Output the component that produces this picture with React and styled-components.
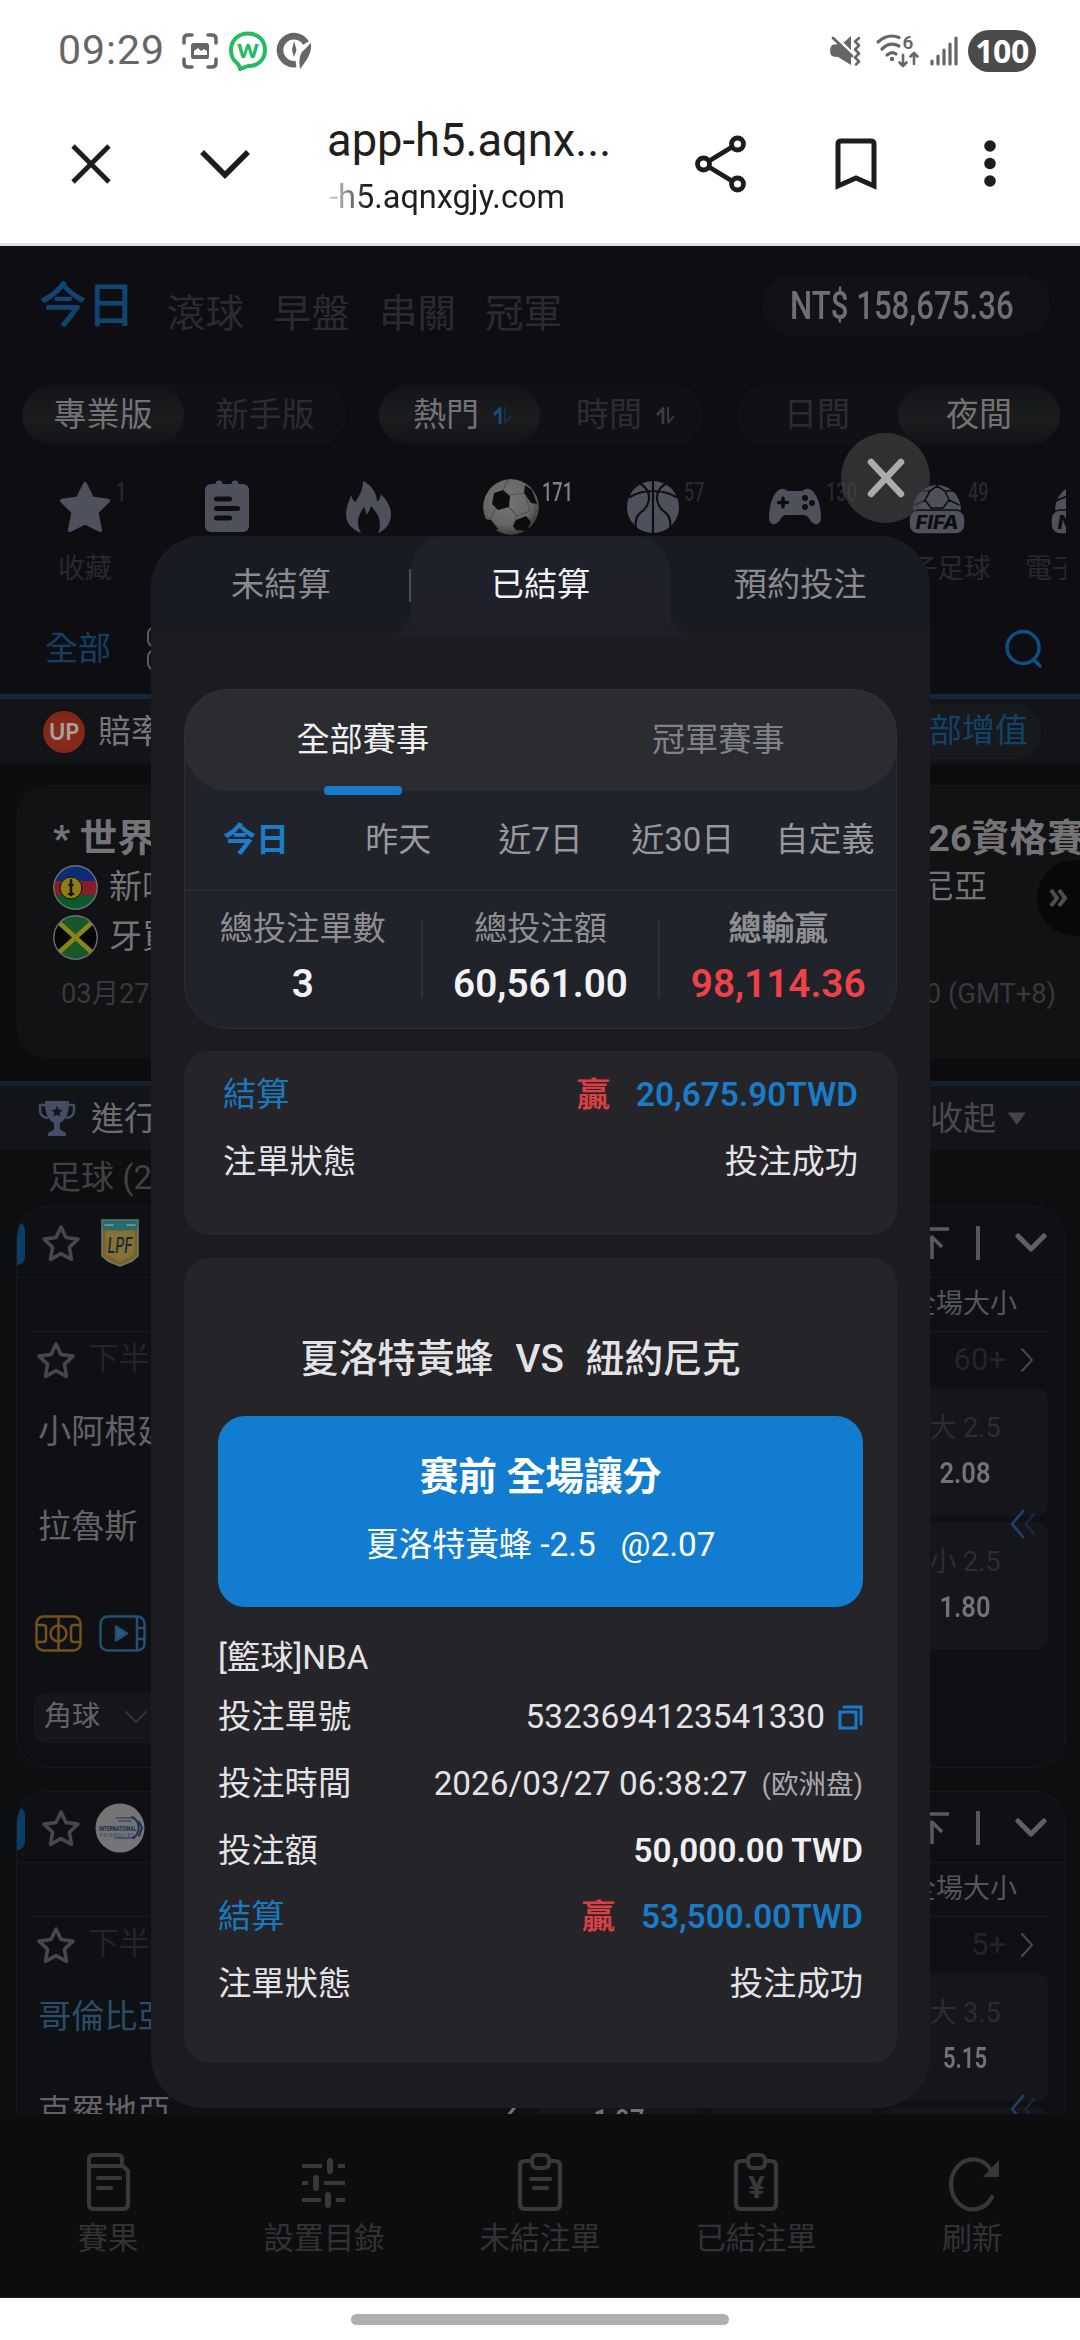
import React from "react";
import styled, { createGlobalStyle, css } from "styled-components";

const Global = createGlobalStyle`
  * { box-sizing: border-box; }
  html, body { margin: 0; background: #fff; }
  body { font-family: Roboto, "Noto Sans CJK TC", sans-serif; -webkit-font-smoothing: antialiased; }
`;

const Screen = styled.div`
  width: 1080px; height: 2340px; overflow: hidden; background: #fff; line-height: 1.2;
  display: flex; flex-direction: column; white-space: nowrap; position: relative;
  svg { display: block; flex: none; }
`;

/* ---------- system and browser chrome ---------- */
const StatusBar = styled.div`
  height: 102px; flex: none; display: flex; align-items: center;
  padding: 0 44px 0 58px; color: #666;
`;
const Clock = styled.div`font-size: 41px; width: 124px; letter-spacing: 1px;`;
const StatusGroup = styled.div`
  display: flex; align-items: center; gap: 10px; ${p => p.$end && "margin-left: auto;"}
`;
const Battery = styled.div`
  width: 68px; height: 42px; border-radius: 21px; background: #4a4a4a; color: #fff;
  font: 700 32px/42px "Open Sans", Roboto, sans-serif; letter-spacing: -.5px; text-align: center;
`;
const BrowserBar = styled.div`
  height: 144px; flex: none; display: flex; align-items: center; color: #1d1d1f;
  border-bottom: 3px solid #dde2e4; padding: 0 0 17px 69px;
`;
const BarIcon = styled.div`width: ${p => p.$w}px; display: flex; ${p => p.$c && "justify-content: center;"}`;
const Address = styled.div`width: 347px; color: #1f1f21;`;
const PageTitle = styled.div`font-size: 45.3px; line-height: 58px; height: 60px; margin: 0 0 0 -2px;`;
const PageHost = styled.div`
  font-size: 32.5px; line-height: 40px; margin-top: 5px; width: fit-content; color: transparent;
  background: linear-gradient(90deg, #ddd 0, #777 22px, #1f1f21 36px); background-clip: text;
`;

/* ---------- page behind the sheet ---------- */
const Page = styled.main`
  height: 1868px; flex: none; overflow: hidden; background: #0d0e10;
  display: flex; flex-direction: column;
  > * { flex: none; }
`;
const TopZone = styled.div`background: #0e0e12; border-bottom: 5px solid #14273a;`;
const Header = styled.div`height: 118px; display: flex; align-items: center; padding: 0 30px 0 39px;`;
const NavMain = styled.div`font-size: 48px; line-height: 60px; font-weight: 500; color: #0f4571; width: 128px; padding-top: 1px;`;
const NavItem = styled.div`font-size: 38.5px; line-height: 50px; color: #2b2b2e; width: 106px; margin-top: 18px;`;
const Balance = styled.div`
  margin-left: auto; width: 288px; height: 62px; border-radius: 31px; background: #101216; padding: 2px 8px 0 0;
  display: flex; justify-content: center; align-items: center; color: #6f6f72;
`;
const Narrow = styled.span`
  display: inline-block; transform: scaleX(${p => p.$s || 0.8}); transform-origin: ${p => p.$o || "center"};
  font-size: ${p => p.$f}px; font-weight: 500;
`;
const Segments = styled.div`height: 102px; display: flex; align-items: center; gap: 33px; padding: 0 20px 0 22px;`;
const Segment = styled.div`flex: 1; height: 62px; display: flex; align-items: center; border-radius: 31px; background: #101115;`;
const Option = styled.div`
  flex: 1; height: 58px; border-radius: 29px; display: flex; align-items: center; justify-content: center; gap: 14px;
  font-size: 33px; color: ${p => (p.$on ? "#737375" : "#2c2d30")}; padding-left: ${p => p.$pl || 0}px;
  ${p => p.$on && "background: linear-gradient(#121417, #1a1c1e 55%, #111316);"}
`;
const Sports = styled.div`height: 136px; width: 1066px; overflow: hidden; padding: 13px 0 0 14px; display: flex;`;
const Sport = styled.div`width: 142px; flex: none; display: flex; flex-direction: column; align-items: center;`;
const SportIcon = styled.div`height: 56px; display: flex; align-items: center; position: relative;`;
const Count = styled.div`
  position: absolute; left: calc(50% + 31px); top: 0; font-size: 26px; line-height: 26px; font-weight: 500;
  transform: scaleX(.7); transform-origin: left; color: ${p => (p.$on ? "#808080" : "#28292d")};
`;
const SportName = styled.div`font-size: 27px; line-height: 32px; margin-top: 18px; color: #29292c;`;
const Filters = styled.div`
  height: 92px; display: flex; align-items: center; padding: 1px 36px 0 45px; font-size: 33px; color: #124064; gap: 36px;
  svg:last-child { margin-left: auto; }
`;
const OddsBar = styled.div`
  height: 65px; background: #121417; display: flex; align-items: center; padding: 0 39px 0 43px; font-size: 33px; color: #777779;
`;
const UpBadge = styled.div`
  width: 42px; height: 42px; border-radius: 50%; margin-right: 13px; text-align: center;
  background: radial-gradient(circle at 50% 55%, #8f2c1b, #7e2718 70%); color: #a9a09e; font: 700 22px/42px Lato, sans-serif;
`;
const Boost = styled.div`
  margin-left: auto; height: 55px; line-height: 54px; border-radius: 27px; padding: 0 13px 0 40px; background: #17191c; color: #124368;
`;
const Carousel = styled.div`height: 317px; padding: 21px 0 23px 16px; background: #0d0d0f;`;
const Feature = styled.div`
  height: 273px; border-radius: 32px 0 0 32px; background: #111214; padding: 31px 0 0 37px; position: relative; color: #747476;
`;
const Between = styled.div`display: flex; justify-content: space-between; align-items: center;`;
const FeatureTitle = styled(Between)`font-size: 37.8px; font-weight: 700; height: 46px; margin-right: -5px;`;
const FeatureTeam = styled(Between)`height: 50px; font-size: 33px; padding-right: 93px; > span { display: flex; align-items: center; gap: 11px; }`;
const FeatureDate = styled(Between)`padding: 0 24px 0 8px; height: 40px; margin-top: 12px; font-size: 27.3px; color: #38393c;`;
const NextTab = styled.div`
  position: absolute; right: 0; top: 75px; width: 43px; height: 76px; border-radius: 38px 0 0 38px; background: #08080a;
  display: flex; align-items: center; justify-content: center;
`;
const SectionBar = styled.div`
  height: 69px; border-top: 5px solid #122132; background: #121418; display: flex; align-items: center;
  padding: 1px 54px 0 38px; font-size: 33px; color: #6d6d70;
`;
const SectionName = styled.div`margin-left: 15px;`;
const Collapse = styled.div`margin-left: auto; display: flex; align-items: center; gap: 12px; color: #49494b;`;
const SectionCount = styled.div`height: 56px; padding: 0 48px; font-size: 33px; line-height: 55px; color: #414144;`;

const League = styled.section`
  margin: 0 14px 23px 16px; height: 562px; border: 1px solid #17191c; border-radius: 32px; background: #0f1013;
  overflow: hidden; flex: none;
`;
const LeagueHead = styled.div`
  height: 71px; border-bottom: 1px solid #17191c; display: flex; align-items: center; padding-top: 2px;
  > i { width: 8px; height: 43px; border-radius: 0 16px 16px 0; background: #0a3e66; margin-right: 15px; }
`;
const LeagueBadge = styled.div`width: 48px; margin-left: 14px; display: flex; justify-content: center;`;
const LeagueTools = styled.div`margin-left: auto; display: flex; align-items: center; padding-right: 18px; color: #5a5a5d;`;
const Divider = styled.div`width: 4px; height: 34px; background: #57575a; margin: 0 35px 0 27px;`;
const Columns = styled.div`
  margin: 0 17px 0 15px; height: 54px; border-bottom: 1px solid #1a1c1f; text-align: right; padding-right: 31px;
  font-size: 27px; line-height: 53px; color: #55575a;
`;
const MatchInfo = styled.div`height: 56px; display: flex; align-items: center; padding: 0 32px 0 18px; font-size: 31px; color: #222427;`;
const Period = styled.div`margin-left: 11px; margin-top: -3px;`;
const More = styled.div`margin-left: auto; display: flex; gap: 15px; align-items: center; margin-top: -1px;`;
const MatchBody = styled.div`display: flex; justify-content: space-between; padding: 0 17px 0 21px;`;
const Teams = styled.div`width: 440px;`;
const Team = styled.div`height: 95px; line-height: 87px; font-size: 33.2px; color: ${p => (p.$hl ? "#284e69" : "#636365")};`;
const Tools = styled.div`display: flex; gap: 17px; margin: 37px 0 0 -3px;`;
const Select = styled.div`
  margin: 41px 0 0 -4px; width: 150px; height: 50px; border-radius: 12px; background: #15161a; padding: 0 0 2px 10px;
  display: flex; align-items: center; gap: 25px; font-size: 28px; color: #646467;
`;
const Odds = styled.div`display: grid; grid-template-columns: repeat(3, 166px); gap: 6px 7px; position: relative; align-content: start;`;
const OddsCell = styled.div`
  height: 128px; border-radius: 12px; background: #15161a; display: flex; flex-direction: column; align-items: center;
  padding-top: 20px; color: #2c2d31; font-size: 27px; line-height: 40px;
`;
const Price = styled.b`
  color: #737376; font-size: 29px; line-height: 50px; font-weight: 600; margin-top: ${p => p.$up || 0}px;
  transform: scaleX(${p => p.$s || 0.88});
`;
const Swipe = styled.div`position: absolute; right: 11px; top: 120px;`;
const PageFlick = styled.div`position: absolute; left: -31px; top: 132px;`;
const TabBar = styled.nav`
  height: 184px; flex: none; background: #0d0d10; display: flex; padding-top: 38px;
  border-bottom: 1px solid #1a1a1c; color: #323235;
`;
const Tab = styled.div`flex: 1; display: flex; flex-direction: column; align-items: center; font-size: 30.3px; line-height: 40px; gap: 7px;`;
const Gesture = styled.div`height: 42px; display: flex; justify-content: center; padding-top: 16px; > i { width: 378px; height: 11px; border-radius: 6px; background: #afafaf; }`;

/* ---------- sheet ---------- */
const Close = styled.button`
  position: absolute; left: 841px; top: 433px; width: 89px; height: 90px; border-radius: 50%; border: 0; padding: 0;
  background: rgba(72, 72, 74, .6); display: flex; align-items: center; justify-content: center;
`;
const Sheet = styled.div`
  position: absolute; left: 151px; top: 536px; width: 779px; height: 1572px; border-radius: 52px; overflow: hidden;
  background: #1c1b20; display: flex; flex-direction: column; color: #e3e3e6;
`;
const SheetTabs = styled.div`height: 101px; flex: none; background: linear-gradient(#181b22 80%, #1b1c21); display: flex;`;
const SheetTab = styled.div`
  flex: 1; text-align: center; font-size: 33.2px; line-height: 97px; color: #8a8b8f; position: relative;
  ${p => p.$bar && css`&::after { content: ""; position: absolute; right: 0; top: 33px; width: 2px; height: 33px; background: #4c4e53; }`}
  ${p => p.$on && css`
    color: #f2f2f5; background: linear-gradient(#1f212a, #1f2029 80%, #1e1d24); border-radius: 36px 36px 0 0;
    &::before, &::after {
      content: ""; position: absolute; bottom: 0; width: 28px; height: 28px;
    }
    &::before { right: 100%; background: radial-gradient(circle at 0 0, transparent 27px, #1e1e26 28px); }
    &::after { left: 100%; background: radial-gradient(circle at 100% 0, transparent 27px, #1e1e26 28px); }
  `}
`;
const Summary = styled.div`
  margin: 52px 33px 0; height: 340px; flex: none; border: 1px solid #2b2e33; border-radius: 44px; background: #20232a;
`;
const Kinds = styled.div`height: 102px; margin: -1px; border-radius: 46px; background: #2b2c30; display: flex; border: 1px solid #303236; border-bottom: 0;`;
const Kind = styled.div`
  flex: 1; text-align: center; font-size: 33.2px; line-height: 99px; color: ${p => (p.$on ? "#f0f0f2" : "#818286")}; position: relative;
  ${p => p.$on && css`&::after { content: ""; position: absolute; left: calc(50% - 39px); bottom: -4px; width: 78px; height: 9px; border-radius: 4px; background: #187bca; }`}
`;
const Ranges = styled.div`height: 101px; display: flex; border-bottom: 2px solid #272a30;`;
const Range = styled.div`
  flex: 1; text-align: center; font-size: 33px; line-height: 100px; color: #97989c;
  ${p => p.$on && "color: #1b7dc9; font-weight: 700;"}
`;
const Stats = styled.div`display: flex; padding-top: 30px;`;
const Stat = styled.div`
  flex: 1; height: 77px; text-align: center; color: #8e8f93; font-size: 33.2px; line-height: 16px;
  &:not(:last-child) { border-right: 2px solid #2d3036; }
  > b { display: block; margin: 30px -10px 0; font-size: 38.7px; line-height: 34px; font-weight: 600; color: ${p => p.$c || "#f2f2f4"}; }
`;
const Ticket = styled.div`
  margin: ${p => p.$mt}px 33px 0; border-radius: 26px; background: #252429; padding: ${p => p.$pad}; height: ${p => p.$h}px; flex: none;
`;
const Line = styled.div`
  display: flex; align-items: center; height: ${p => p.$h || 66.7}px; font-size: 33.3px; color: ${p => p.$c || "#e3e3e6"};
  > :first-child { margin-right: auto; }
`;
const Won = styled.span`color: #d84046; font-weight: 700; margin-right: 26px;`;
const Amount = styled.b`font-weight: 600; color: ${p => p.$c || "#f0f0f2"};`;
const Hint = styled.small`font-size: 27.5px; color: #a9a9ad; margin-left: 14px;`;
const Fixture = styled.div`
  height: 96px; padding-left: 82px; display: flex; gap: 22px; font-size: 38.7px; line-height: 78px; font-weight: 500;
`;
const Pick = styled.div`
  height: 191px; border-radius: 27px; background: #127dd0; color: #fff; text-align: center; padding-top: 37px; margin-bottom: 25px;
  font-size: 33.3px; line-height: 48px; white-space: pre;
  > b { display: block; font-size: 38.7px; line-height: 48px; margin-bottom: 20px; }
`;
const CopyGap = styled.span`margin-left: 13px;`;

/* ---------- drawings ---------- */
const S = ({ w, h, vb, children, ...r }) => (
  <svg width={w} height={h} viewBox={vb || `0 0 ${w} ${h}`} fill="none" overflow="visible" strokeLinecap="round" strokeLinejoin="round" {...r}>{children}</svg>
);
const muted = "#4e505c";
const dark = "#0e0e12";
const dim = "#38383b";

const StarSolid = () => (
  <S w={54} h={54}><path d="M27 4l7 14.500 16 2.300-11.500 11.300 3.500 17.900-15-7.500-15 7.500 3.500-17.900L4 20.800l16-2.300z" fill={muted} stroke={muted} strokeWidth="4" /></S>
);
const Notes = () => (
  <S w={44} h={52}>
    <rect y="3" width="44" height="48" rx="6" fill={muted} /><path d="M14 3v2M30 3v2" stroke={muted} strokeWidth="7" />
    <path d="M11.500 18h13M11.500 27.500h21M11.500 37h13" stroke={dark} strokeWidth="5" />
  </S>
);
const Flame = () => (
  <S w={46} h={54}><path d="M17 1C24 4 31 12 31 22c2-2 4-5 4-8 6 7 10 13 10 20 0 9-5 16-13 19 4-8 2-18-7-27-1 4-3 7-5 9 0-4-1-6-2-8-4 6-6 10-6 15 0 4 1 7 3 11C5 49 0 43 0 34c0-7 3-12 5-19 1 3 2 5 4 7 5-6 8-13 8-21z" fill={muted} /></S>
);
const Soccer = () => (
  <S w={58} h={58}>
    <defs>
      <radialGradient id="ball" cx=".45" cy=".4" r=".6"><stop offset="0" stopColor="#737371" /><stop offset=".7" stopColor="#676765" /><stop offset="1" stopColor="#3d3d3b" /></radialGradient>
      <clipPath id="ballClip"><circle cx="29" cy="29" r="28" /></clipPath>
    </defs>
    <g clipPath="url(#ballClip)">
      <circle cx="29" cy="29" r="28" fill="url(#ball)" />
      <path d="M28 17l15-2M27 29l8 9M13 31l-5 11M35 38l13-5-4-14M35 38l-3 7M20 14l6-12" stroke="#525250" strokeWidth="1.200" />
      <path d="M12 15l9-3 7 6-1 11-11 3-6-6zM43 7l7 5 5 14-6-1-7-10zM34 42l10-4 5 6-4 9-11-1-3-4zM1 41l8 1 7 9-5 3-10-7z" fill="#0d0d0e" />
    </g>
  </S>
);
const Basket = () => (
  <S w={52} h={52}>
    <circle cx="26" cy="26" r="26" fill={muted} />
    <path d="M26 0v52M3 16C16 8 36 8 49 16M14 3c14 10 7 24-1 29-4 4-5 10-4 16M38 3c-14 10-7 24 1 29 4 4 5 10 4 16" stroke={dark} strokeWidth="2.200" />
  </S>
);
const Pad = () => (
  <S w={52} h={38}>
    <path d="M12 1c3-1 5 1 7 2h14c2-1 4-3 7-2 8 2 12 18 12 28 0 9-7 9-11 3-2-4-4-5-7-5H18c-3 0-5 1-7 5-4 6-11 6-11-3C0 19 4 3 12 1z" fill={muted} />
    <path d="M14 10v9M9.500 14.500h9" stroke={dark} strokeWidth="3.500" /><g fill={dark}><circle cx="36" cy="10" r="3" /><circle cx="43" cy="15" r="3" /><circle cx="36" cy="19" r="3" /></g>
  </S>
);
const CupBall = ({ word, id }) => (
  <S w={56} h={56}>
    <path d="M4 31a24 25 0 1 1 48 0z" fill={muted} />
    {id === "f" ? <path d="M21 12l7-5 8 5 4 9-6 8H22l-6-8zM21 12l-9 0M36 12l8 0M40 21l10 5M16 21L6 26M28 7V2" stroke={dark} strokeWidth="1.600" />
      : <path d="M5 22C18 14 38 14 51 22M28 3v28" stroke={dark} strokeWidth="2" />}
    <rect x="0" y="31" width="56" height="24" rx="9" fill={muted} stroke={dark} strokeWidth="1.500" />
    <text x="28" y="50" textAnchor="middle" fontFamily="Inter, sans-serif" fontStyle="italic" fontWeight="800" fontSize="18.500" fill={dark} textLength="43" lengthAdjust="spacingAndGlyphs">{word}</text>
  </S>
);
const Sorter = ({ a, b }) => (
  <S w={19} h={19}><path d="M1 9L7 2.500V18" stroke={a} strokeWidth="2.800" strokeLinecap="butt" /><path d="M12 1v15.500l6-6" stroke={b} strokeWidth="2" strokeLinecap="butt" /></S>
);
const StarLine = () => (
  <S w={42} h={40}><path d="M21 4l5 10.500 12 1.600-8.600 8.200 2.100 12L21 30.600 10.500 36.300l2.100-12L4 16.100l12-1.600z" stroke="#46474b" strokeWidth="3.600" /></S>
);
const Shield = () => (
  <S w={38} h={48}>
    <path d="M1 1h36v36l-6 5-12 5-12-5-6-5z" fill="#7a6420" stroke="#6a7a7c" strokeWidth="1.500" />
    <path d="M1.500 1.500h35V11h-35z" fill="#276b70" /><path d="M4 6h8M26 6h8" stroke="#7d9b9c" strokeWidth="1.500" />
    <path d="M4.500 12h29v23L19 43 4.500 35z" fill="#84703a" />
    <text x="19" y="34" textAnchor="middle" fontFamily="Inter, sans-serif" fontStyle="italic" fontWeight="500" fontSize="22" fill="#10292e" textLength="25" lengthAdjust="spacingAndGlyphs">LPF</text>
  </S>
);
const Intl = () => (
  <S w={50} h={50}>
    <circle cx="25" cy="25" r="24.500" fill="#747474" />
    <path d="M21 15h18M24 18h12M20 35h20" stroke="#1c3458" strokeWidth="1.200" /><path d="M37 14a12 12 0 0 1 1 21M44 19l3 6-3 8" stroke="#1c3458" strokeWidth="2" />
    <text x="4" y="28" fontFamily="Roboto, sans-serif" fontWeight="800" fontSize="8" fill="#1b2f52" textLength="37" lengthAdjust="spacingAndGlyphs">INTERNATIONAL</text>
    <text x="5" y="33.500" fontFamily="Roboto, sans-serif" fontSize="4.500" fill="#33435f" textLength="34">FRIENDLIES</text>
  </S>
);
const Flag = ({ j }) => (
  <S w={45} h={45}>
    <clipPath id={j ? "fj" : "fn"}><circle cx="22.500" cy="22.500" r="21.500" /></clipPath>
    {j ? (
      <g clipPath="url(#fj)"><path d="M0 0h45v45H0z" fill="#17572b" /><path d="M0 4v37l22-18.500zM45 4v37L23 22.500z" fill="#060606" /><path d="M2 4l41 37M43 4L2 41" stroke="#8a8418" strokeWidth="4.500" /></g>
    ) : (
      <g clipPath="url(#fn)"><path d="M0 0h45v16H0z" fill="#0e2b78" /><path d="M0 16h45v14H0z" fill="#841f2a" /><path d="M0 30h45v15H0z" fill="#0b5a2b" /><circle cx="18" cy="23" r="11" fill="#8c7d12" stroke="#111" /><path d="M18 15v15M16 29h4M16.500 20h3" stroke="#15130a" strokeWidth="2.500" /></g>
    )}
    <circle cx="22.500" cy="22.500" r="21.700" stroke="#6c6f73" strokeWidth="1.400" />
  </S>
);
const Trophy = () => (
  <S w={38} h={36}>
    <path d="M7 0h24c0 12-2 18-9 22v7h-6v-7C9 18 7 12 7 0zM10 35v-3l5-3h8l5 3v3z" fill="#454d66" />
    <path d="M8 4H2v5c0 4 2 7 7 8M30 4h6v5c0 4-2 7-7 8" stroke="#454d66" strokeWidth="2.500" />
    <path d="M19 5l1.700 3.500 3.800.5-2.800 2.700.7 3.800L19 13.700l-3.400 1.800.7-3.800L13.500 9l3.800-.5z" fill="#14161c" />
  </S>
);
const Court = () => (
  <S w={47} h={37} stroke="#74511d" strokeWidth="2.500"><rect x="1.500" y="1.500" width="44" height="34" rx="7" /><path d="M23.500 1.500v34M2 10h6q3 0 3 3v11q0 3-3 3H2M45 10h-6q-3 0-3 3v11q0 3 3 3h6" /><circle cx="23.500" cy="18.500" r="8" /></S>
);
const Play = () => (
  <S w={47} h={37} stroke="#23506f" strokeWidth="2.500"><rect x="1.500" y="1.500" width="44" height="34" rx="7" /><path d="M38 2v33M38 13h7M38 24h7" /><path d="M17 11.500l11 7-11 7z" fill="#2b5a7d" /></S>
);
const Dbl = () => (
  <S w={28} h={32} strokeWidth="2.500" strokeLinecap="butt" strokeLinejoin="miter"><path d="M15 2L3 16l12 14" stroke="#22406f" /><path d="M26 5l-9.500 11L26 27" stroke="#182741" /></S>
);
const TabIcon = ({ kind }) => (
  <S w={48} h={60} stroke={dim} strokeWidth="4.200">
    {kind === 0 && <g><path d="M5 14V7q0-4 4-4h25q4 0 4 4v7M5 14h34l5 5v33q0 5-5 5H10q-5 0-5-5z" /><path d="M14 26h22M14 36h13" /></g>}
    {kind === 1 && <g strokeLinecap="butt"><path d="M2 14h20M38 14h7M2 31h6M24 31h21M2 48h19M36 48h9" /><path d="M30 9v10M16 26v10M28 43v10" strokeWidth="6" strokeLinecap="round" /></g>}
    {(kind === 2 || kind === 3) && <g><path d="M15 9h-6q-5 0-5 5v38q0 5 5 5h30q5 0 5-5V14q0-5-5-5h-6" /><rect x="16" y="3" width="17" height="13" rx="5" /></g>}
    {kind === 2 && <path d="M15 27h19M18 36h13" />}
    {kind === 3 && <text x="24.500" y="46" textAnchor="middle" fontSize="31" fontWeight="700" fontFamily="Roboto, sans-serif" fill={dim} stroke="none">¥</text>}
    {kind === 4 && <g><path d="M43 18A22 25 0 1 0 44 45" /><path d="M51 8v17H35z" fill={dim} stroke="none" /></g>}
  </S>
);

function LeagueCard({ badge, more, home, away, hl, over, price1, under, price2, mid }) {
  return (
    <League>
      <LeagueHead>
        <i /><StarLine /><LeagueBadge>{badge}</LeagueBadge>
        <LeagueTools>
          <S w={34} h={34} stroke="currentColor" strokeWidth="3.500" strokeLinecap="butt"><path d="M0 3h34M17 33V11M7 21l10-10 10 10" /></S>
          <Divider />
          <S w={32} h={20} stroke="#606064" strokeWidth="5"><path d="M3 3l13 13L29 3" /></S>
        </LeagueTools>
      </LeagueHead>
      <Columns>全場大小</Columns>
      <MatchInfo>
        <StarLine /><Period>下半場</Period>
        <More>{more}<S w={12} h={24} stroke="#48494d" strokeWidth="2"><path d="M1 1l10 11L1 23" /></S></More>
      </MatchInfo>
      <MatchBody>
        <Teams>
          <Team $hl={hl}>{home}</Team>
          <Team>{away}</Team>
          <Tools><Court /><Play /></Tools>
          <Select>角球<S w={22} h={12} stroke="#35373b" strokeWidth="1.800"><path d="M1 1l10 10L21 1" /></S></Select>
        </Teams>
        <Odds>
          <OddsCell /><OddsCell /><OddsCell><span>大 {over}</span><Price $s={price1 === "5.15" ? 0.76 : 0.88}>{price1}</Price></OddsCell>
          <OddsCell>{mid && <Price $up={-32}>{mid}</Price>}</OddsCell><OddsCell /><OddsCell><span>小 {under}</span><Price>{price2}</Price></OddsCell>
          {mid && <PageFlick><S w={12} h={20} stroke="#737376" strokeWidth="3"><path d="M10 2L2 12" /></S></PageFlick>}
          <Swipe><Dbl /></Swipe>
        </Odds>
      </MatchBody>
    </League>
  );
}

const sports = [
  [<StarSolid />, "1", "收藏"], [<Notes />, "", ""], [<Flame />, "", ""], [<Soccer />, "171", ""], [<Basket />, "57", ""],
  [<Pad />, "130", ""], [<CupBall word="FIFA" id="f" />, "49", "電子足球"], [<CupBall word="NBA" id="n" />, "", "電子籃球"],
];

export default function App() {
  return (
    <Screen>
      <Global />
      <StatusBar>
        <Clock>09:29</Clock>
        <StatusGroup>
          <S w={36} h={36} stroke="#666" strokeWidth="3.500">
            <path d="M2 10V6q0-4 4-4h4M26 2h4q4 0 4 4v4M34 26v4q0 4-4 4h-4M10 34H6q-4 0-4-4v-4" /><rect x="9" y="10" width="18" height="16" rx="2.500" fill="#666" stroke="none" />
            <path d="M12 22v-4l4-3 3 3 3-2 3 2v4z" fill="#fff" stroke="none" />
          </S>
          <S w={40} h={40}>
            <path d="M20 2.500c10 0 17 7 17 16.500s-7 16-16 16c-3 0-5 2-9 3 0-2-1-4-3-6-4-3-6-8-6-13C3 9 11 2.500 20 2.500z" stroke="#25bb62" strokeWidth="4" />
            <text x="20" y="26.500" textAnchor="middle" fontFamily="Lato, sans-serif" fontWeight="900" fontSize="27" fill="#25bb62">w</text>
          </S>
          <S w={36} h={40} style={{ marginLeft: -2 }}>
            <path d="M30 12A14 14 0 1 0 20 33" stroke="#666" strokeWidth="6.500" strokeLinecap="butt" /><path d="M35 12c1 10-4 17-11 26-1-7-1-12 2-17z" fill="#666" /><path d="M18 10l2.500 9-2.500 7-2-7z" fill="#666" />
          </S>
        </StatusGroup>
        <StatusGroup $end>
          <S w={32} h={32} stroke="#666" strokeWidth="2.500">
            <path d="M2 10q-2 2-2 5.500T2 21q2 1 6 1l13 8V21L8 9z" fill="#666" stroke="none" /><path d="M12 9l9-8v17z" fill="#666" stroke="none" />
            <path d="M7 3l18 18" stroke="#fff" strokeWidth="2.500" /><path d="M3 3l19 18" strokeWidth="2.800" /><path d="M29 3l-4 3.500 4 4-4 4 4 4-4 4 4 4-3 3" />
          </S>
          <S w={44} h={34} stroke="#666" strokeWidth="3.200" style={{ marginLeft: 4 }}>
            <path d="M2 8Q12-1 23 3.500M6 15Q14 7 23 12M11 21q5-4 9-1" /><circle cx="16" cy="25" r="2.200" fill="#666" stroke="none" />
            <path d="M27 21v11M23.500 28.500L27 32l3.500-3.500M38 30V19M34.500 22.500L38 19l3.500 3.500" strokeWidth="2.600" />
            <text x="26.500" y="15" fontSize="19" fontWeight="600" fontFamily="Roboto, sans-serif" fill="#666" stroke="none">6</text>
          </S>
          <S w={28} h={30} stroke="#666" strokeWidth="3.200"><path d="M2 25v3M8 20v8M14 14v14M20 8v20M26 2v26" /></S>
          <Battery>100</Battery>
        </StatusGroup>
      </StatusBar>
      <BrowserBar>
        <BarIcon $w={129}><S w={44} h={44} stroke="currentColor" strokeWidth="4.800" strokeLinecap="butt"><path d="M4 4l36 36M40 4L4 40" /></S></BarIcon>
        <BarIcon $w={131}><S w={54} h={34} stroke="currentColor" strokeWidth="5.500" strokeLinecap="butt" strokeLinejoin="miter"><path d="M4 5l23 23L50 5" /></S></BarIcon>
        <Address><PageTitle>app-h5.aqnx...</PageTitle><PageHost>-h5.aqnxgjy.com</PageHost></Address>
        <BarIcon $w={90} $c>
          <S w={54} h={58} stroke="currentColor" strokeWidth="4.800"><path d="M15 26l23-14M15 32l23 14" /><circle cx="9.500" cy="29" r="6" /><circle cx="43.500" cy="9" r="6" /><circle cx="43.500" cy="49" r="6" /></S>
        </BarIcon>
        <BarIcon $w={179} $c><S w={42} h={54} stroke="currentColor" strokeWidth="5" strokeLinejoin="miter"><path d="M3 49V7q0-3 3-3h30q3 0 3 3v42L21 41z" /></S></BarIcon>
        <BarIcon $w={90} $c><S w={14} h={50} fill="currentColor"><circle cx="7" cy="7" r="5.800" /><circle cx="7" cy="24.500" r="5.800" /><circle cx="7" cy="42" r="5.800" /></S></BarIcon>
      </BrowserBar>

      <Page>
        <TopZone>
          <Header>
            <NavMain>今日</NavMain>
            {["滾球", "早盤", "串關", "冠軍"].map(t => <NavItem key={t}>{t}</NavItem>)}
            <Balance><Narrow $f={39} $s={0.8}>NT$ 158,675.36</Narrow></Balance>
          </Header>
          <Segments>
            <Segment><Option $on>專業版</Option><Option>新手版</Option></Segment>
            <Segment><Option $on $pl={6}>熱門<Sorter a="#164d7c" b="#1b2c40" /></Option><Option $pl={8}>時間<Sorter a="#3a3b3e" b="#3a3b3e" /></Option></Segment>
            <Segment><Option>日間</Option><Option $on>夜間</Option></Segment>
          </Segments>
          <Sports>
            {sports.map(([icon, n, name], i) => (
              <Sport key={i}><SportIcon>{icon}{n && <Count $on={n === "171"}>{n}</Count>}</SportIcon><SportName>{name}</SportName></Sport>
            ))}
          </Sports>
          <Filters>
            全部
            <S w={30} h={46} stroke="#5b5b5e" strokeWidth="2"><rect x="1" y="1" width="20" height="20" rx="7" /><rect x="1" y="24" width="20" height="20" rx="7" /></S>
            <S w={40} h={40} stroke="#105080" strokeWidth="3.500"><circle cx="19" cy="18.500" r="16" /><path d="M30 31l6 6" /></S>
          </Filters>
        </TopZone>
        <OddsBar><UpBadge>UP</UpBadge>賠率<Boost>全部增值</Boost></OddsBar>
        <Carousel>
          <Feature>
            <FeatureTitle><span>* 世界盃</span><span>26資格賽</span></FeatureTitle>
            <FeatureTeam><span><Flag />新喀</span><span>尼亞</span></FeatureTeam>
            <FeatureTeam><span><Flag j />牙買</span></FeatureTeam>
            <FeatureDate><span>03月27日</span><span>00 (GMT+8)</span></FeatureDate>
            <NextTab><S w={20} h={18} stroke="#4c4d51" strokeWidth="4" strokeLinejoin="miter" strokeLinecap="butt"><path d="M2 1l6 8-6 8M10 1l6 8-6 8" /></S></NextTab>
          </Feature>
        </Carousel>
        <SectionBar>
          <Trophy /><SectionName>進行中</SectionName>
          <Collapse>收起<S w={18} h={13}><path d="M1 1h16L9 12z" fill="#454548" stroke="#454548" /></S></Collapse>
        </SectionBar>
        <SectionCount>足球 (2)</SectionCount>
        <LeagueCard badge={<Shield />} more="60+" home="小阿根廷" away="拉魯斯" over="2.5" price1="2.08" under="2.5" price2="1.80" />
        <LeagueCard badge={<Intl />} more="5+" home="哥倫比亞" hl away="克羅地亞" over="3.5" price1="5.15" under="3.5" price2="1.14" mid="1.97" />
      </Page>
      <TabBar>
        {["賽果", "設置目錄", "未結注單", "已結注單", "刷新"].map((t, i) => <Tab key={t}><TabIcon kind={i} />{t}</Tab>)}
      </TabBar>
      <Gesture><i /></Gesture>

      <Close><S w={40} h={40} stroke="#ababad" strokeWidth="6.500"><path d="M5 4l30 32M35 4L5 36" /></S></Close>
      <Sheet>
        <SheetTabs><SheetTab $bar>未結算</SheetTab><SheetTab $on>已結算</SheetTab><SheetTab>預約投注</SheetTab></SheetTabs>
        <Summary>
          <Kinds><Kind $on>全部賽事</Kind><Kind>冠軍賽事</Kind></Kinds>
          <Ranges>{["今日", "昨天", "近7日", "近30日", "自定義"].map((t, i) => <Range key={t} $on={i === 0}>{t}</Range>)}</Ranges>
          <Stats>
            <Stat>總投注單數<b>3</b></Stat><Stat>總投注額<b>60,561.00</b></Stat><Stat $c="#ef4146"><strong>總輸贏</strong><b>98,114.36</b></Stat>
          </Stats>
        </Summary>
        <Ticket $mt={22} $h={184} $pad="11px 39px">
          <Line $c="#1c78bd"><span>結算</span><Won>贏</Won><Amount $c="#1a7bc6">20,675.90TWD</Amount></Line>
          <Line $h={66}><span>注單狀態</span><span>投注成功</span></Line>
        </Ticket>
        <Ticket $mt={23} $h={805} $pad="62px 34px 0">
          <Fixture><span>夏洛特黃蜂</span><span>VS</span><span>紐約尼克</span></Fixture>
          <Pick><b>赛前 全場讓分</b>{"夏洛特黃蜂 -2.5   @2.07"}</Pick>
          <Line $h={52}><span>[籃球]NBA</span></Line>
          <Line><span>投注單號</span><span>5323694123541330</span><CopyGap><S w={25} h={25} stroke="#187bcb" strokeWidth="3" strokeLinejoin="miter"><path d="M2 7h16v16H2z" /><path d="M6 2h17v17" /></S></CopyGap></Line>
          <Line><span>投注時間</span><span>2026/03/27 06:38:27</span><Hint>(欧洲盘)</Hint></Line>
          <Line><span>投注額</span><Amount>50,000.00 TWD</Amount></Line>
          <Line $c="#1c78bd"><span>結算</span><Won>贏</Won><Amount $c="#1a7bc6">53,500.00TWD</Amount></Line>
          <Line><span>注單狀態</span><span>投注成功</span></Line>
        </Ticket>
      </Sheet>
    </Screen>
  );
}
